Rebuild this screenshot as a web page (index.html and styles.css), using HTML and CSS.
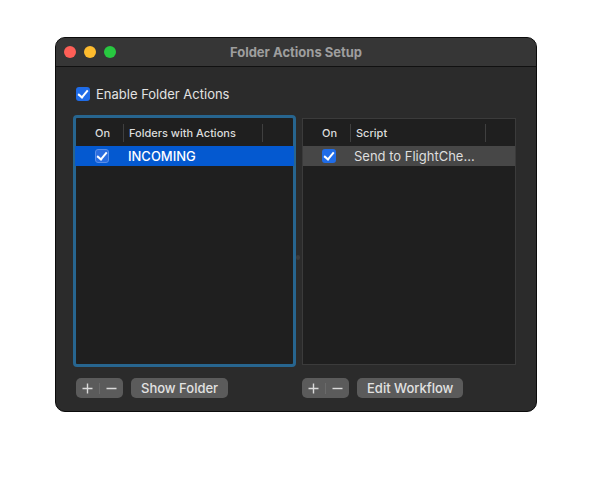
FILE: index.html
```html
<!DOCTYPE html>
<html lang="en">
  <head>
    <meta charset="UTF-8" />
    <title>Folder Actions Setup</title>
    <link rel="stylesheet" href="styles.css">
  </head>
  <body>
    <div class="window">
      <div class="titlebar">
        <div class="lights">
          <span class="light red"></span>
          <span class="light yellow"></span>
          <span class="light green"></span>
        </div>
        <div class="title">Folder Actions Setup</div>
      </div>

      <div class="content">
        <label class="enable">
          <span class="check"></span>
          Enable Folder Actions
        </label>

        <div class="panes">
          <div class="pane pane-left">
            <div class="table focused">
              <div class="thead">
                <div class="col-on">On</div>
                <div class="col-name">Folders with Actions</div>
              </div>
              <div class="row selected">
                <div class="col-on"><span class="check"></span></div>
                <div class="col-name">INCOMING</div>
              </div>
            </div>
            <div class="buttons">
              <div class="segment">
                <span><svg width="11" height="11" viewBox="0 0 11 11"><path d="M5.5 0.5v10M0.5 5.5h10" stroke="#dadada" stroke-width="1.4"/></svg></span>
                <span><svg width="11" height="11" viewBox="0 0 11 11"><path d="M0.5 5.5h10" stroke="#dadada" stroke-width="1.4"/></svg></span>
              </div>
              <div class="btn">Show Folder</div>
            </div>
          </div>

          <div class="splitter"><span class="dot"></span></div>

          <div class="pane pane-right">
            <div class="table">
              <div class="thead">
                <div class="col-on">On</div>
                <div class="col-name wide">Script</div>
              </div>
              <div class="row">
                <div class="col-on"><span class="check"></span></div>
                <div class="col-name">Send to FlightChe...</div>
              </div>
            </div>
            <div class="buttons">
              <div class="segment">
                <span><svg width="11" height="11" viewBox="0 0 11 11"><path d="M5.5 0.5v10M0.5 5.5h10" stroke="#dadada" stroke-width="1.4"/></svg></span>
                <span><svg width="11" height="11" viewBox="0 0 11 11"><path d="M0.5 5.5h10" stroke="#dadada" stroke-width="1.4"/></svg></span>
              </div>
              <div class="btn">Edit Workflow</div>
            </div>
          </div>
        </div>
      </div>
    </div>
  </body>
</html>
```

FILE: styles.css
```css
:root {
  --body: #2b2b2b;
  --table: #1f1f1f;
  --button: #5b5b5b;
  --text: #e2e2e2;
  --blue: #1f6ce8;
}

body {
  margin: 0;
  background: #fff;
  font-family: Inter, "Liberation Sans", sans-serif;
  color: var(--text);
}

.window {
  margin: 37px 0 0 55px;
  width: 482px;
  height: 375px;
  box-sizing: border-box;
  background: var(--body);
  border: 1px solid #0b0b0b;
  border-radius: 10px;
  overflow: hidden;
}

.titlebar {
  height: 28px;
  background: #363636;
  border-bottom: 1px solid #111;
  display: flex;
  align-items: center;
  position: relative;
}

.lights {
  display: flex;
  gap: 8px;
  padding-left: 8px;
}

.light {
  width: 12px;
  height: 12px;
  border-radius: 50%;
}

.red { background: #fe5f57; }
.yellow { background: #febc2e; }
.green { background: #28c840; }

.title {
  position: absolute;
  left: 0;
  right: 0;
  text-align: center;
  font-size: 13px;
  font-weight: 700;
  color: #9e9e9e;
}

.content {
  padding: 20px 0 0 17px;
}

.enable {
  display: flex;
  align-items: center;
  gap: 6px;
  font-size: 13px;
  height: 14px;
  margin-left: 3px;
}

.check {
  width: 14px;
  height: 14px;
  box-sizing: border-box;
  border-radius: 3px;
  background: var(--blue);
  display: inline-block;
  position: relative;
  flex-shrink: 0;
}

.check::after {
  content: "";
  position: absolute;
  left: 4px;
  top: 1px;
  width: 4px;
  height: 8px;
  border: solid #fff;
  border-width: 0 2px 2px 0;
  transform: rotate(40deg);
}

.panes {
  display: flex;
  margin-top: 14px;
}

.pane-left {
  width: 223px;
}

.pane-right {
  width: 214px;
  margin-top: 3px;
}

.table {
  background: var(--table);
  box-sizing: border-box;
  border: 1px solid #3b3b3b;
  height: 247px;
}

.table.focused {
  border: 3px solid #27658f;
  border-radius: 4px;
  height: 252px;
}

.focused .thead {
  margin-top: 1px;
}

.thead,
.row {
  display: flex;
  align-items: center;
  font-size: 11px;
}

.thead {
  height: 27px;
  font-weight: 500;
  color: #dcdcdc;
}

.thead .col-name {
  border-left: 1px solid #3f3f3f;
  border-right: 1px solid #3f3f3f;
  height: 18px;
  line-height: 18px;
  width: 133px;
  padding-left: 5px;
}

.thead .col-name.wide {
  width: 129px;
}

.col-on {
  width: 47px;
  box-sizing: border-box;
  padding-left: 19px;
  display: flex;
  align-items: center;
}

.row {
  height: 20px;
  font-size: 13px;
  background: #474747;
  color: #dedede;
}

.row .col-name {
  padding-left: 4px;
}

.row.selected {
  background: #0459d0;
  color: #fff;
  margin: 0 -1px;
  padding-left: 1px;
  font-weight: 500;
}

.row.selected .col-name {
  padding-left: 5px;
}

.row.selected .check {
  background: #2a6de0;
  border: 1px solid #5a8ee8;
}

.row.selected .check::after {
  left: 3px;
  top: 0;
}

.splitter {
  width: 6px;
  display: flex;
  align-items: center;
}

.dot {
  width: 4px;
  height: 5px;
  border-radius: 2px;
  background: #3c3c3c;
  margin-top: 2px;
}

.buttons {
  display: flex;
  gap: 8px;
  margin-top: 11px;
  padding-left: 3px;
}

.pane-right .buttons {
  margin-top: 13px;
  padding-left: 0;
}

.segment,
.btn {
  height: 20px;
  border-radius: 5px;
  background: var(--button);
  font-size: 13px;
  display: flex;
  align-items: center;
}

.segment span {
  width: 23px;
  height: 11px;
  display: flex;
  justify-content: center;
}

.segment span + span {
  border-left: 1px solid #6a6a6a;
}

.btn {
  padding: 0 10px;
  font-weight: 500;
}
```
